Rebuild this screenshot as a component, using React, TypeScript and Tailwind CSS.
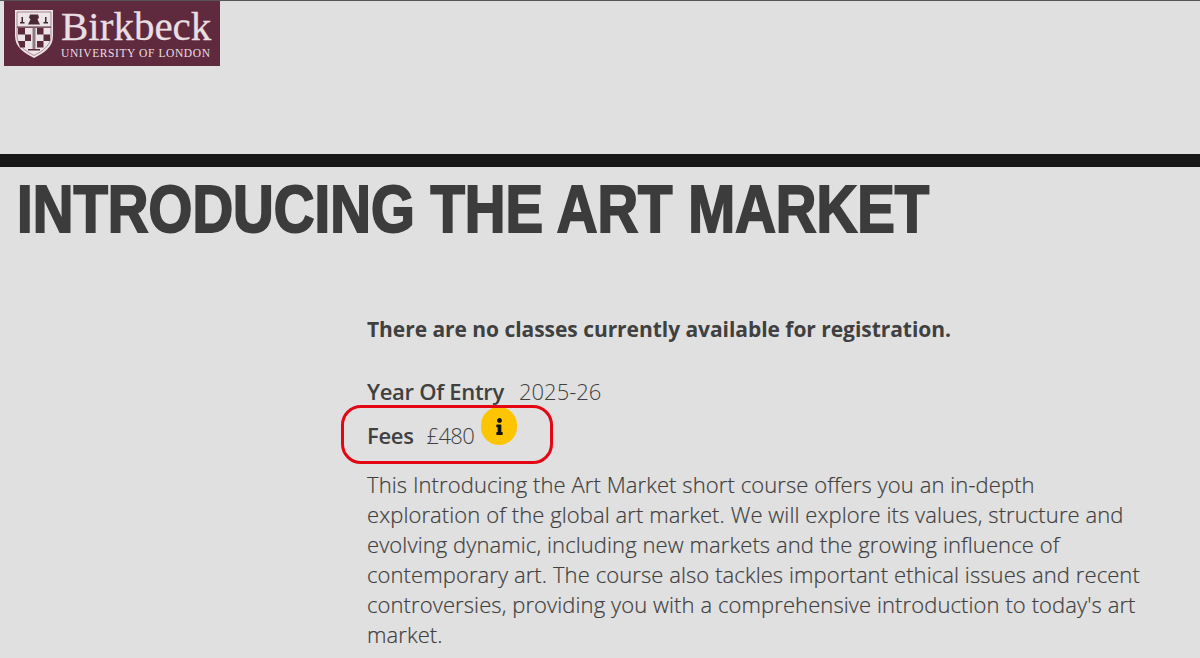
import { FaInfo } from "react-icons/fa";

function Shield() {
  return (
    <svg width="40" height="50" viewBox="0 0 40 50" className="shrink-0">
      <path d="M1 1H39V27C39 38 30 44 20 49C10 44 1 38 1 27Z" fill="#ece4e6" />
      <path d="M3 3H37V27C37 36 29 42 20 46.500C11 42 3 36 3 27Z" fill="none" stroke="#7a4a5a" strokeWidth="0.6" />
      <path d="M16 5.500h8l1 3-1.500 2 2.500 5H14l2.500-5L15 8.500Z" fill="#4a2a35" />
      <path d="M7.500 8h1.500v5h1.500v1.500H6V13h1.500ZM31 8h1.500v5H34v1.500h-4.500V13H31Z" fill="#3d2730" />
      <path d="M3 17.500h34v1.200H3Z" fill="#5b2a3b" />
      <path d="M4 19h7v6.500H4ZM11 25.500h6V32h-6ZM4 32h7v6.500H6ZM23 19h6.500v6.500H23ZM29.500 25.500H36V32h-6.500ZM23 32h6.500v6.500H23Z" fill="#5b2a3b" />
      <path d="M18.500 19h3v21h-3Z" fill="#8e7a80" />
      <path d="M14 40h12v1.500H14Z" fill="#5b2a3b" />
    </svg>
  );
}

export default function App() {
  return (
    <div className="w-[1200px] h-[658px] overflow-hidden bg-[#e0e0e0] text-[#404040] font-['Open_Sans','Noto_Sans',sans-serif]">
      <div className="h-[154px] border-t border-[#555555]">
        <div className="ml-1 w-[216px] h-[65px] bg-[#5f2a3d] flex items-center gap-[7px] pl-[10px] pt-px">
          <Shield />
          <div className="flex flex-col text-[#e9dfe2] font-['Liberation_Serif',serif] whitespace-nowrap">
            <span className="text-[41px] leading-[36px] [-webkit-text-stroke:0.3px_#e9dfe2]">Birkbeck</span>
            <span className="text-[11.500px] leading-[14px] tracking-[0.6px] mt-[2px]">UNIVERSITY OF LONDON</span>
          </div>
        </div>
      </div>
      <div className="h-[13px] bg-[#181818]" />
      <h1 className="pl-[20px] mt-[9px] text-[66px] leading-[66px] font-bold whitespace-nowrap font-['Liberation_Sans',sans-serif] text-[#3c3c3c] origin-left scale-x-[0.854] [-webkit-text-stroke:2px_#3c3c3c]">
        INTRODUCING THE ART MARKET
      </h1>
      <div className="ml-[367px] w-[775px] mt-[72px] text-[22px] leading-[30px]">
        <p className="font-bold text-[21px] tracking-[-0.05px]">There are no classes currently available for registration.</p>
        <div className="mt-[32px]"><b className="font-semibold tracking-[-0.3px]">Year Of Entry</b><span className="ml-[15px] font-light">2025-26</span></div>
        <div className="relative mt-[14px] h-[30px]">
          <b className="font-semibold tracking-[-0.3px]">Fees</b><span className="ml-[13px] font-light tracking-[-0.7px]">£480</span>
          <span className="absolute left-[114px] -top-[13px] w-9 h-[38px] rounded-full bg-[#fdc500] flex items-center justify-center text-[#111111]"><FaInfo size={17} /></span>
          <span className="absolute -left-[26px] -top-[15px] w-[212px] h-[59px] rounded-[20px] border-[3px] border-[#e30613]" />
        </div>
        <p className="mt-[19px] font-light tracking-[0.09px] [-webkit-text-stroke:0.2px_#404040]">
          This Introducing the Art Market short course offers you an in-depth exploration of the global art market. We will explore its values, structure and evolving dynamic, including new markets and the growing influence of contemporary art. The course also tackles important ethical issues and recent controversies, providing you with a comprehensive introduction to today's art market.
        </p>
      </div>
    </div>
  );
}
